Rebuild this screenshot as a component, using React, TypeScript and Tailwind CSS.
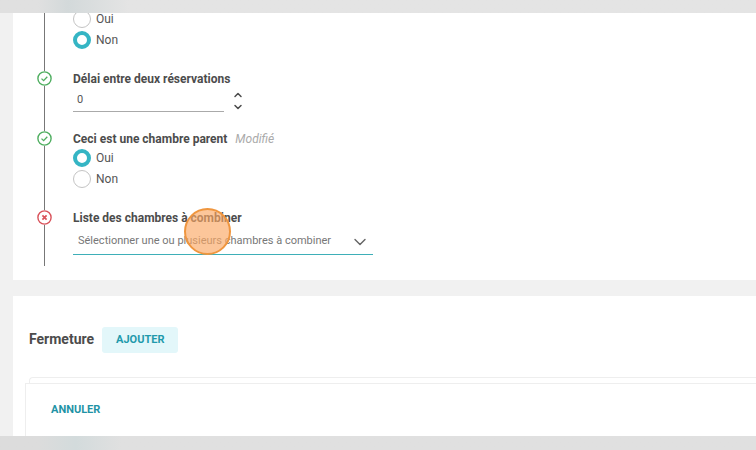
import type { ReactNode } from "react";

import { ChevronDown, ChevronUp } from "lucide-react";

type Status = "valid" | "error";

function StatusIcon({ status }: { status: Status }) {
  const isValid = status === "valid";

  return (
    <svg viewBox="0 0 15 15" fill="none" className={isValid ? "size-[15px] text-[#4fae60]" : "size-[15px] text-[#d9525a]"}>
      <circle cx="7.5" cy="7.5" r="6.6" fill="white" stroke="currentColor" strokeWidth="1.4" />
      {isValid ? (
        <path d="M4.5 7.6l2.1 2 3.7-3.9" stroke="currentColor" strokeWidth="1.3" />
      ) : (
        <path d="M5.4 5.4l4.2 4.2M9.6 5.4l-4.2 4.2" stroke="currentColor" strokeWidth="1.7" />
      )}
    </svg>
  );
}

function Step({ status, children }: { status?: Status; children: ReactNode }) {
  return (
    <div className="flex gap-[21px]">
      <div className="flex w-[15px] shrink-0 flex-col items-center">
        {status && <StatusIcon status={status} />}
        <span className="w-px grow bg-[#777]" />
      </div>
      <div className="min-w-0 grow">{children}</div>
    </div>
  );
}

function YesNo({ name, value }: { name: string; value: "Oui" | "Non" }) {
  return (
    <>
      {["Oui", "Non"].map((option) => (
        <label key={option} className="flex h-[21px] items-center gap-[5px] text-[12px] text-[#555]">
          <input
            type="radio"
            name={name}
            defaultChecked={option === value}
            className="size-[18px] appearance-none rounded-full border border-[#c4c4c4] bg-white checked:border-4 checked:border-[#35b5c4]"
          />
          {option}
        </label>
      ))}
    </>
  );
}

export default function App() {
  return (
    <div className="flex min-h-screen flex-col overflow-hidden bg-[#f1f1f1] font-['Roboto',sans-serif] text-[12px] text-[#4c4c4c]">
      <header className="z-10 h-[13px] bg-linear-to-r from-[#e0e0e0] from-5% via-[#d3d9da] via-9% to-[#e4e4e4] to-17%" />

      <main className="flex grow flex-col gap-4 pl-[13px]">
        <section className="bg-white pb-[14px] pl-6">
          <Step>
            <div className="-mt-[5px] pb-[21px]">
              <YesNo name="premier" value="Non" />
            </div>
          </Step>

          <Step status="valid">
            <div className="h-[60px]">
              <label htmlFor="delai" className="block leading-4 font-bold">
                Délai entre deux réservations
              </label>
              <div className="flex items-start gap-2">
                <div className="w-[151px] border-b border-[#aaa]">
                  <input
                    id="delai"
                    defaultValue="0"
                    className="block h-6 w-full px-1 text-[11px] text-[#555] outline-none"
                  />
                </div>
                <div className="flex flex-col pt-0.5">
                  <button type="button" aria-label="Augmenter">
                    <ChevronUp className="size-3" strokeWidth={3} />
                  </button>
                  <button type="button" aria-label="Diminuer">
                    <ChevronDown className="size-3" strokeWidth={3} />
                  </button>
                </div>
              </div>
            </div>
          </Step>

          <Step status="valid">
            <fieldset className="h-[79px]">
              <legend className="flex gap-2 leading-4 font-bold">
                Ceci est une chambre parent
                <em className="font-normal text-[#aaa]">Modifié</em>
              </legend>
              <YesNo name="parent" value="Oui" />
            </fieldset>
          </Step>

          <Step status="error">
            <div className="relative h-14">
              <label htmlFor="chambres" className="block leading-4 font-bold">
                Liste des chambres à combiner
              </label>
              <div className="relative w-[300px] border-b border-[#3eafb8]">
                <select
                  id="chambres"
                  className="block h-7 w-full appearance-none px-[5px] pt-0.5 text-[11px] text-[#777] outline-none"
                >
                  <option>Sélectionner une ou plusieurs chambres à combiner</option>
                </select>
                <ChevronDown className="pointer-events-none absolute top-1.5 right-[3px] size-5 text-[#666]" strokeWidth={1.7} />
              </div>
              <span className="pointer-events-none absolute -top-0.5 left-[111px] size-[47px] rounded-full border-2 border-[#ef963f] bg-[#fba864]/65" />
            </div>
          </Step>
        </section>

        <section className="flex grow flex-col bg-white pt-[31px]">
          <div className="flex items-start gap-2 px-4">
            <h2 className="text-[14px] leading-6 font-bold">Fermeture</h2>
            <button type="button" className="h-[26px] rounded-[3px] bg-[#e3f7fa] px-3.5 text-[11px] font-bold text-[#1f9aac]">
              AJOUTER
            </button>
          </div>
          <div className="mt-6 ml-4 h-1.5 rounded-tl-sm border-t border-l border-[#eee]" />
          <div className="ml-3 grow border-t border-l border-[#eee] px-[25px] pt-4">
            <button type="button" className="text-[11px] leading-4 font-bold text-[#1f93a6]">
              ANNULER
            </button>
          </div>
        </section>
      </main>

      <footer className="h-[14px] bg-linear-to-r from-[#dcdcdc] from-5% via-[#d3dbdc] via-10% to-[#e0e0e0] to-16%" />
    </div>
  );
}
